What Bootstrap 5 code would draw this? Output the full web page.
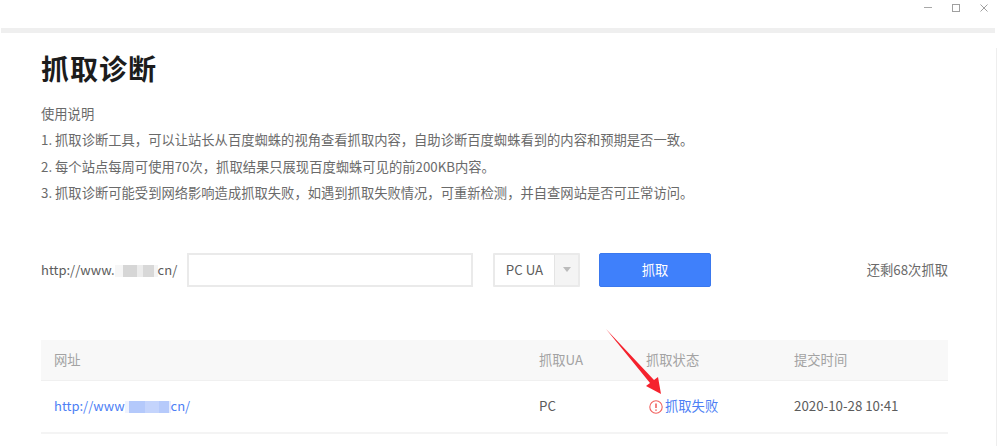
<!DOCTYPE html>
<html lang="zh-CN">
<head>
<meta charset="utf-8">
<title>抓取诊断</title>
<link href="https://cdn.jsdelivr.net/npm/bootstrap@5.3.0/dist/css/bootstrap.min.css" rel="stylesheet">
<style>
html,body{height:446px;overflow:hidden;background:#fff}
body{font-family:"Noto Sans CJK SC","Noto Sans",sans-serif;font-size:13.3px;color:#666;position:relative}
.win-ctrl{gap:20px;padding:0 12px 0 0;height:28px}
.win-ctrl svg{margin-top:-13px}
.win-band{height:5px;background:#efefef;margin:0 5px 0 1px}
.panel{padding:0 48px 0 41px;height:412px;border-bottom:1px solid #e4e4e4;margin-right:3px;border-right:1px solid #eee}
.ttl{font-size:28px;font-weight:700;color:#1c1c1c;letter-spacing:1px;line-height:40px;margin:15px 0 13px}
.intro{line-height:26.4px;color:#6a6a6a;margin:0}
.formrow{margin-top:46px;height:34px}
.lbl{width:146px;color:#5c5c5c;white-space:nowrap;font-size:13px}
.blur1{display:inline-block;width:43px;height:12px;vertical-align:-2px;background:linear-gradient(90deg,#f6f6f6 0 8px,#d6d6d6 8px 22px,#ececec 22px 28px,#d8d8d8 28px 39px,#f4f4f4 39px)}
.blur2{display:inline-block;width:46px;height:12px;vertical-align:-2px;background:linear-gradient(90deg,#eef2ff 0 4px,#b4c9fb 4px 20px,#c4d4fc 20px 34px,#b6cafb 34px 44px,#e6edff 44px)}
.lnk{font-size:13px}
.url-in{width:286px;height:34px;border:2px solid #eaeaea;border-radius:0;padding:0 8px;font-size:13px}
.sel{width:87px;height:34px;margin-left:20px;border:2px solid #eaeaea;border-radius:1px}
.sel-val{width:60px;color:#5c5c5c;text-align:center;line-height:30px;border-right:1px solid #e4e4e4}
.sel-car{flex:1;background:#f4f4f4}
.sel-tri{width:0;height:0;border-left:4.5px solid transparent;border-right:4.5px solid transparent;border-top:5px solid #bbb}
.btn-grab{width:112px;height:34px;margin-left:19px;background:#3f80fb;border:1px solid #3a78ee;border-radius:2px;color:#fff;font-size:13.3px;padding:0;line-height:30px}
.btn-grab:hover{background:#3f80fb;color:#fff}
.remain{margin-left:auto;color:#6a6a6a}
.gridtab{margin:53px 0 0;width:907px;table-layout:fixed;font-size:13.3px}
.gridtab th{background:#f8f8f8;color:#a3a3a3;font-weight:400;height:41px;padding:0 13px;border-bottom:1px solid #f0f0f0;vertical-align:middle}
.gridtab td{height:52px;padding:0 13px;color:#5c5c5c;border-bottom:2px solid #f4f4f4;vertical-align:middle;box-shadow:none}
.gridtab a{color:#4d7ff5;text-decoration:none}
.c1{width:485px}.c2{width:107px}.c3{width:148px}.c4{width:167px}
.gridtab .alert-ico{vertical-align:-3px;margin:0 2px 0 3px}
.arrow{position:absolute;left:600px;top:325px;pointer-events:none}
</style>
</head>
<body>
<div class="d-flex justify-content-end align-items-center win-ctrl">
  <svg width="8" height="8" viewBox="0 0 8 8"><path d="M0 3.5h8" stroke="#a8a8a8" fill="none"/></svg>
  <svg width="8" height="8" viewBox="0 0 8 8"><rect x=".5" y=".5" width="7" height="7" stroke="#a0a0a0" fill="none"/></svg>
  <svg width="8" height="8" viewBox="0 0 8 8"><path d="M.5.5l7 7M7.5.5l-7 7" stroke="#a0a0a0" fill="none"/></svg>
</div>
<div class="win-band"></div>
<main class="panel">
  <h1 class="ttl">抓取诊断</h1>
  <p class="intro">使用说明<br>
  1. 抓取诊断工具，可以让站长从百度蜘蛛的视角查看抓取内容，自助诊断百度蜘蛛看到的内容和预期是否一致。<br>
  2. 每个站点每周可使用70次，抓取结果只展现百度蜘蛛可见的前200KB内容。<br>
  3. 抓取诊断可能受到网络影响造成抓取失败，如遇到抓取失败情况，可重新检测，并自查网站是否可正常访问。</p>
  <div class="formrow d-flex align-items-center">
    <span class="lbl">http://www.<span class="blur1"></span>cn/</span>
    <input class="url-in form-control flex-shrink-0" type="text" aria-label="网址">
    <div class="sel d-flex">
      <div class="sel-val">PC UA</div>
      <div class="sel-car d-flex align-items-center justify-content-center"><span class="sel-tri"></span></div>
    </div>
    <button class="btn btn-grab" type="button">抓取</button>
    <span class="remain">还剩68次抓取</span>
  </div>
  <table class="table gridtab">
    <thead><tr><th class="c1">网址</th><th class="c2">抓取UA</th><th class="c3">抓取状态</th><th class="c4">提交时间</th></tr></thead>
    <tbody><tr>
      <td><a class="lnk" href="#">http://www<span class="blur2"></span>cn/</a></td>
      <td>PC</td>
      <td><svg class="alert-ico" width="14" height="14" viewBox="0 0 14 14"><circle cx="7" cy="7" r="6.2" fill="none" stroke="#f2625f" stroke-width="1.1"/><path d="M7 3.4v4.6M7 9.4v1.4" stroke="#ee4c48" stroke-width="1.4" fill="none"/></svg><a href="#">抓取失败</a></td>
      <td>2020-10-28 10:41</td>
    </tr></tbody>
  </table>
</main>
<svg class="arrow" width="70" height="75" viewBox="0 0 70 75"><path d="M6 4 L50 58 L46 61 L61 69 L58 52 L54 55 Z" fill="#f5222d"/></svg>
</body>
</html>
